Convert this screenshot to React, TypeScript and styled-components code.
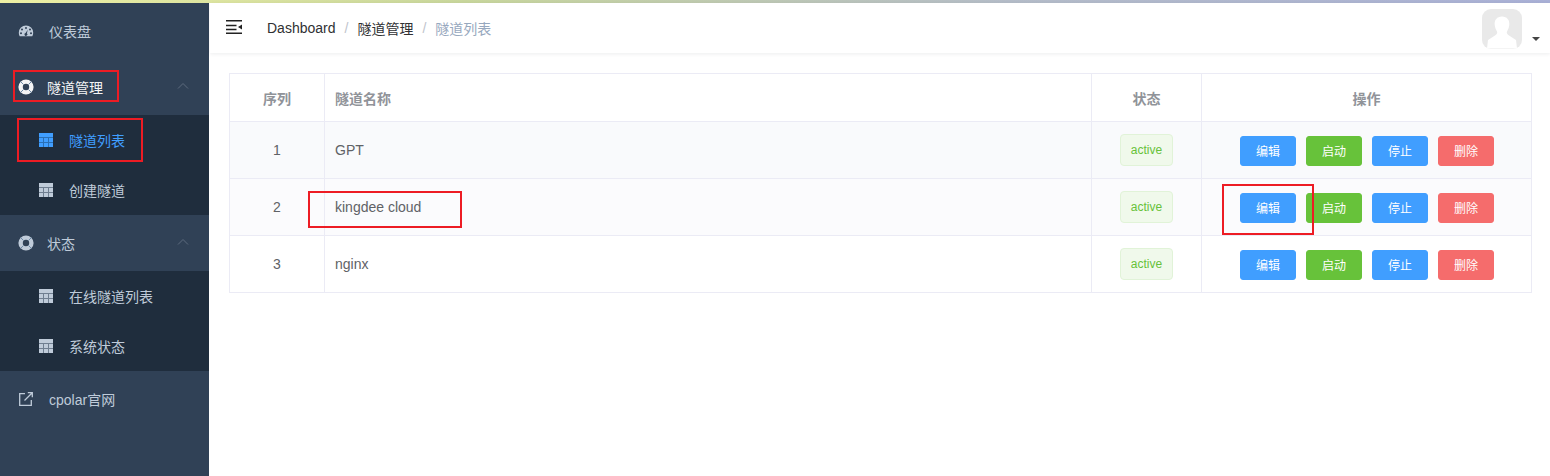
import React, {FunctionComponent} from 'react';
import styled, {createGlobalStyle} from 'styled-components';

const GlobalStyle = createGlobalStyle`
	html, body {
		margin: 0;
		padding: 0;
		height: 100%;
		background: #fff;
		overflow: hidden;
		font-family: "Liberation Sans", "Noto Sans CJK SC", sans-serif;
	}
`;

const Page = styled.div`
	position: relative;
	width: 1550px;
	height: 476px;
	overflow: hidden;
`;

const TopStrip = styled.div`
	height: 3px;
	background: linear-gradient(to right, #eef0a4, #c8d69c 30%, #b4bcc8 65%, #a9b0d6);
`;

const Shell = styled.div`
	display: flex;
	height: 473px;
`;

const Sidebar = styled.nav`
	flex: none;
	width: 209px;
	background: #304156;
`;

const MenuRow = styled.div<{$active?: boolean}>`
	display: flex;
	align-items: center;
	height: 56px;
	padding-left: 18px;
	font-size: 14px;
	color: ${props => props.$active ? '#f4f4f5' : '#bfcbd9'};
`;

const MenuLabel = styled.span<{$gap: number}>`
	margin-left: ${props => props.$gap}px;
	flex: 1;
`;

const Chevron = styled.svg`
	width: 12px;
	height: 12px;
	margin-right: 20px;
	margin-top: -3px;
	fill: none;
	stroke: #5d6b7e;
	stroke-width: 1;
`;

const SubMenu = styled.div`
	background: #1f2d3d;
`;

const SubRow = styled.div<{$active?: boolean}>`
	display: flex;
	align-items: center;
	height: 50px;
	padding-left: 39px;
	font-size: 14px;
	color: ${props => props.$active ? '#409eff' : '#bfcbd9'};
`;

const SubLabel = styled.span`
	margin-left: 16px;
`;

const Main = styled.main`
	flex: 1;
	min-width: 0;
	margin-left: 1px;
`;

const Header = styled.header`
	display: flex;
	align-items: center;
	height: 50px;
	background: #fff;
	box-shadow: 0 1px 4px rgba(0, 21, 41, 0.08);
`;

const Burger = styled.svg`
	flex: none;
	width: 16px;
	height: 14px;
	margin-left: 16px;
	margin-top: -2px;
`;

const Crumbs = styled.div`
	display: flex;
	align-items: center;
	margin-left: 25px;
	margin-top: -1px;
	font-size: 14px;
	color: #303133;
`;

const CrumbSep = styled.span`
	margin: 0 9px;
	color: #c0c4cc;
`;

const CrumbLast = styled.span`
	color: #97a8be;
`;

const AvatarBox = styled.div`
	display: flex;
	align-items: flex-end;
	margin-left: auto;
	margin-right: 10px;
	margin-top: 2px;
`;

const Avatar = styled.svg`
	width: 40px;
	height: 40px;
	display: block;
`;

const Caret = styled.i`
	width: 0;
	height: 0;
	margin: 0 0 8px 10px;
	border-left: 4px solid transparent;
	border-right: 4px solid transparent;
	border-top: 4px solid #444;
`;

const Content = styled.div`
	padding: 20px 18px 0 19px;
`;

const Table = styled.table`
	width: 1303px;
	table-layout: fixed;
	border-collapse: collapse;
	font-size: 14px;
	color: #606266;
	border: 1px solid #ebebf5;
`;

const HeadCell = styled.th<{$left?: boolean}>`
	height: 47px;
	padding: 0 ${props => props.$left ? '10px' : '0'};
	border: 1px solid #ebebf5;
	font-weight: bold;
	font-size: 14px;
	color: #909399;
	text-align: ${props => props.$left ? 'left' : 'center'};
`;

const BodyRow = styled.tr<{$bg: string}>`
	background: ${props => props.$bg};
`;

const Cell = styled.td<{$left?: boolean}>`
	height: 56px;
	padding: 0 ${props => props.$left ? '10px' : '0'};
	border: 1px solid #ebebf5;
	text-align: ${props => props.$left ? 'left' : 'center'};
`;

const Tag = styled.span`
	display: inline-block;
	box-sizing: border-box;
	width: 53px;
	height: 32px;
	line-height: 30px;
	font-size: 12px;
	color: #67c23a;
	background: #f0f9eb;
	border: 1px solid #e1f3d8;
	border-radius: 4px;
`;

const Actions = styled.div`
	display: flex;
	justify-content: center;
	gap: 10px;
	padding: 2px 0 0 1px;
`;

const ActionButton = styled.button<{$color: string}>`
	width: 56px;
	height: 30px;
	padding: 0 0 2px;
	font-family: inherit;
	font-size: 12px;
	color: #fff;
	background: ${props => props.$color};
	border: 1px solid ${props => props.$color};
	border-radius: 3px;
`;

const Callout = styled.div<{$x: number; $y: number; $w: number; $h: number}>`
	position: absolute;
	box-sizing: border-box;
	left: ${props => props.$x}px;
	top: ${props => props.$y}px;
	width: ${props => props.$w}px;
	height: ${props => props.$h}px;
	border: 2px solid #ed1c24;
`;

const GaugeIcon = () => (
	<svg width="16" height="16" viewBox="0 0 16 16">
		<path fill="#bfcbd9" fillRule="evenodd" d="M8 2.500a7.200 7.200 0 0 0-7.200 7.200c0 1.300.3 2.500.9 3.600h12.600a7.200 7.200 0 0 0 .9-3.600A7.200 7.200 0 0 0 8 2.500zM8 4a1 1 0 1 1 0 2 1 1 0 0 1 0-2zM4 5.500a1 1 0 1 1 0 2 1 1 0 0 1 0-2zM12 5.500a1 1 0 1 1 0 2 1 1 0 0 1 0-2zM3 9.200a1 1 0 1 1 0 2 1 1 0 0 1 0-2zM13 9.200a1 1 0 1 1 0 2 1 1 0 0 1 0-2zM9.800 6.800l-.9 3.400a1.500 1.500 0 1 1-1.300-.3z"/>
	</svg>
);

const RingIcon: FunctionComponent<{color: string}> = ({color}) => (
	<svg width="16" height="16" viewBox="0 0 16 16">
		<circle cx="8" cy="8" r="5.400" fill="none" stroke={color} strokeWidth="4.400"/>
		<path stroke="#6d8aa8" strokeWidth="1" d="M2.600 2.600l2.900 2.900M13.400 2.600l-2.900 2.900M2.600 13.400l2.900-2.900M13.400 13.400l-2.900-2.900"/>
	</svg>
);

const LinkIcon = () => (
	<svg width="16" height="16" viewBox="0 0 16 16" fill="none" stroke="#bfcbd9" strokeWidth="1.300">
		<path d="M7 2.700H1.700v11.600h11.600V9"/>
		<path d="M6.500 9.500L14 2M9.800 1.700h4.500v4.500"/>
	</svg>
);

const TableIcon: FunctionComponent<{color: string; line: string}> = ({color, line}) => (
	<svg width="14" height="14" viewBox="0 0 14 14">
		<rect width="14" height="14" fill={color}/>
		<path stroke={line} strokeWidth="1" d="M0 4.500h14M0 9.500h14M4.500 4.500V14M9.500 4.500V14"/>
	</svg>
);

const ChevronUp = () => (
	<Chevron viewBox="0 0 12 12">
		<path d="M1 8.500L6 3.500l5 5"/>
	</Chevron>
);

const rows = [
	{id: 1, name: 'GPT', bg: '#f9fafc'},
	{id: 2, name: 'kingdee cloud', bg: '#fbfbfd'},
	{id: 3, name: 'nginx', bg: '#fff'},
];

const buttons = [
	{label: '编辑', color: '#409eff'},
	{label: '启动', color: '#67c23a'},
	{label: '停止', color: '#409eff'},
	{label: '删除', color: '#f56c6c'},
];

const App = () => (
	<Page>
		<GlobalStyle/>
		<TopStrip/>
		<Shell>
			<Sidebar>
				<MenuRow>
					<GaugeIcon/>
					<MenuLabel $gap={15}>仪表盘</MenuLabel>
				</MenuRow>
				<MenuRow $active>
					<RingIcon color="#f4f4f5"/>
					<MenuLabel $gap={13}>隧道管理</MenuLabel>
					<ChevronUp/>
				</MenuRow>
				<SubMenu>
					<SubRow $active>
						<TableIcon color="#409eff" line="#2a6fb5"/>
						<SubLabel>隧道列表</SubLabel>
					</SubRow>
					<SubRow>
						<TableIcon color="#bfcbd9" line="#6f7e90"/>
						<SubLabel>创建隧道</SubLabel>
					</SubRow>
				</SubMenu>
				<MenuRow>
					<RingIcon color="#bfcbd9"/>
					<MenuLabel $gap={13}>状态</MenuLabel>
					<ChevronUp/>
				</MenuRow>
				<SubMenu>
					<SubRow>
						<TableIcon color="#bfcbd9" line="#6f7e90"/>
						<SubLabel>在线隧道列表</SubLabel>
					</SubRow>
					<SubRow>
						<TableIcon color="#bfcbd9" line="#6f7e90"/>
						<SubLabel>系统状态</SubLabel>
					</SubRow>
				</SubMenu>
				<MenuRow>
					<LinkIcon/>
					<MenuLabel $gap={15}>cpolar官网</MenuLabel>
				</MenuRow>
			</Sidebar>
			<Main>
				<Header>
					<Burger viewBox="0 0 16 14">
						<path fill="#222" d="M0 0h16v1.500H0zM0 4.700h10.500v1.500H0zM0 8.700h10.500v1.500H0zM0 12.500h16V14H0zM16 4.500v5l-4-2.500z"/>
					</Burger>
					<Crumbs>
						<span>Dashboard</span>
						<CrumbSep>/</CrumbSep>
						<span>隧道管理</span>
						<CrumbSep>/</CrumbSep>
						<CrumbLast>隧道列表</CrumbLast>
					</Crumbs>
					<AvatarBox>
						<Avatar viewBox="0 0 40 40">
							<rect width="40" height="40" rx="9" fill="#e9e9e9"/>
							<path fill="#fff" d="M20 7.500c5 0 7.800 3.500 7.300 8.500-.3 3-1.500 5-2.300 6.500-.6 1 0 3 2 4l7 4.500 1 8.500H5l1-8.500 7-4.500c2-1 2.600-3 2-4-.8-1.500-2-3.500-2.300-6.500C12.200 11 15 7.500 20 7.500z"/>
						</Avatar>
						<Caret/>
					</AvatarBox>
				</Header>
				<Content>
					<Table>
						<colgroup>
							<col style={{width: 95}}/>
							<col style={{width: 767}}/>
							<col style={{width: 110}}/>
							<col/>
						</colgroup>
						<thead>
							<tr>
								<HeadCell>序列</HeadCell>
								<HeadCell $left>隧道名称</HeadCell>
								<HeadCell>状态</HeadCell>
								<HeadCell>操作</HeadCell>
							</tr>
						</thead>
						<tbody>
							{rows.map(row => (
								<BodyRow key={row.id} $bg={row.bg}>
									<Cell>{row.id}</Cell>
									<Cell $left>{row.name}</Cell>
									<Cell><Tag>active</Tag></Cell>
									<Cell>
										<Actions>
											{buttons.map(button => (
												<ActionButton key={button.label} $color={button.color}>{button.label}</ActionButton>
											))}
										</Actions>
									</Cell>
								</BodyRow>
							))}
						</tbody>
					</Table>
				</Content>
			</Main>
		</Shell>
		<Callout $x={13} $y={70} $w={106} $h={32}/>
		<Callout $x={17} $y={118} $w={126} $h={44}/>
		<Callout $x={308} $y={191} $w={154} $h={37}/>
		<Callout $x={1222} $y={184} $w={92} $h={51}/>
	</Page>
);

export default App;
